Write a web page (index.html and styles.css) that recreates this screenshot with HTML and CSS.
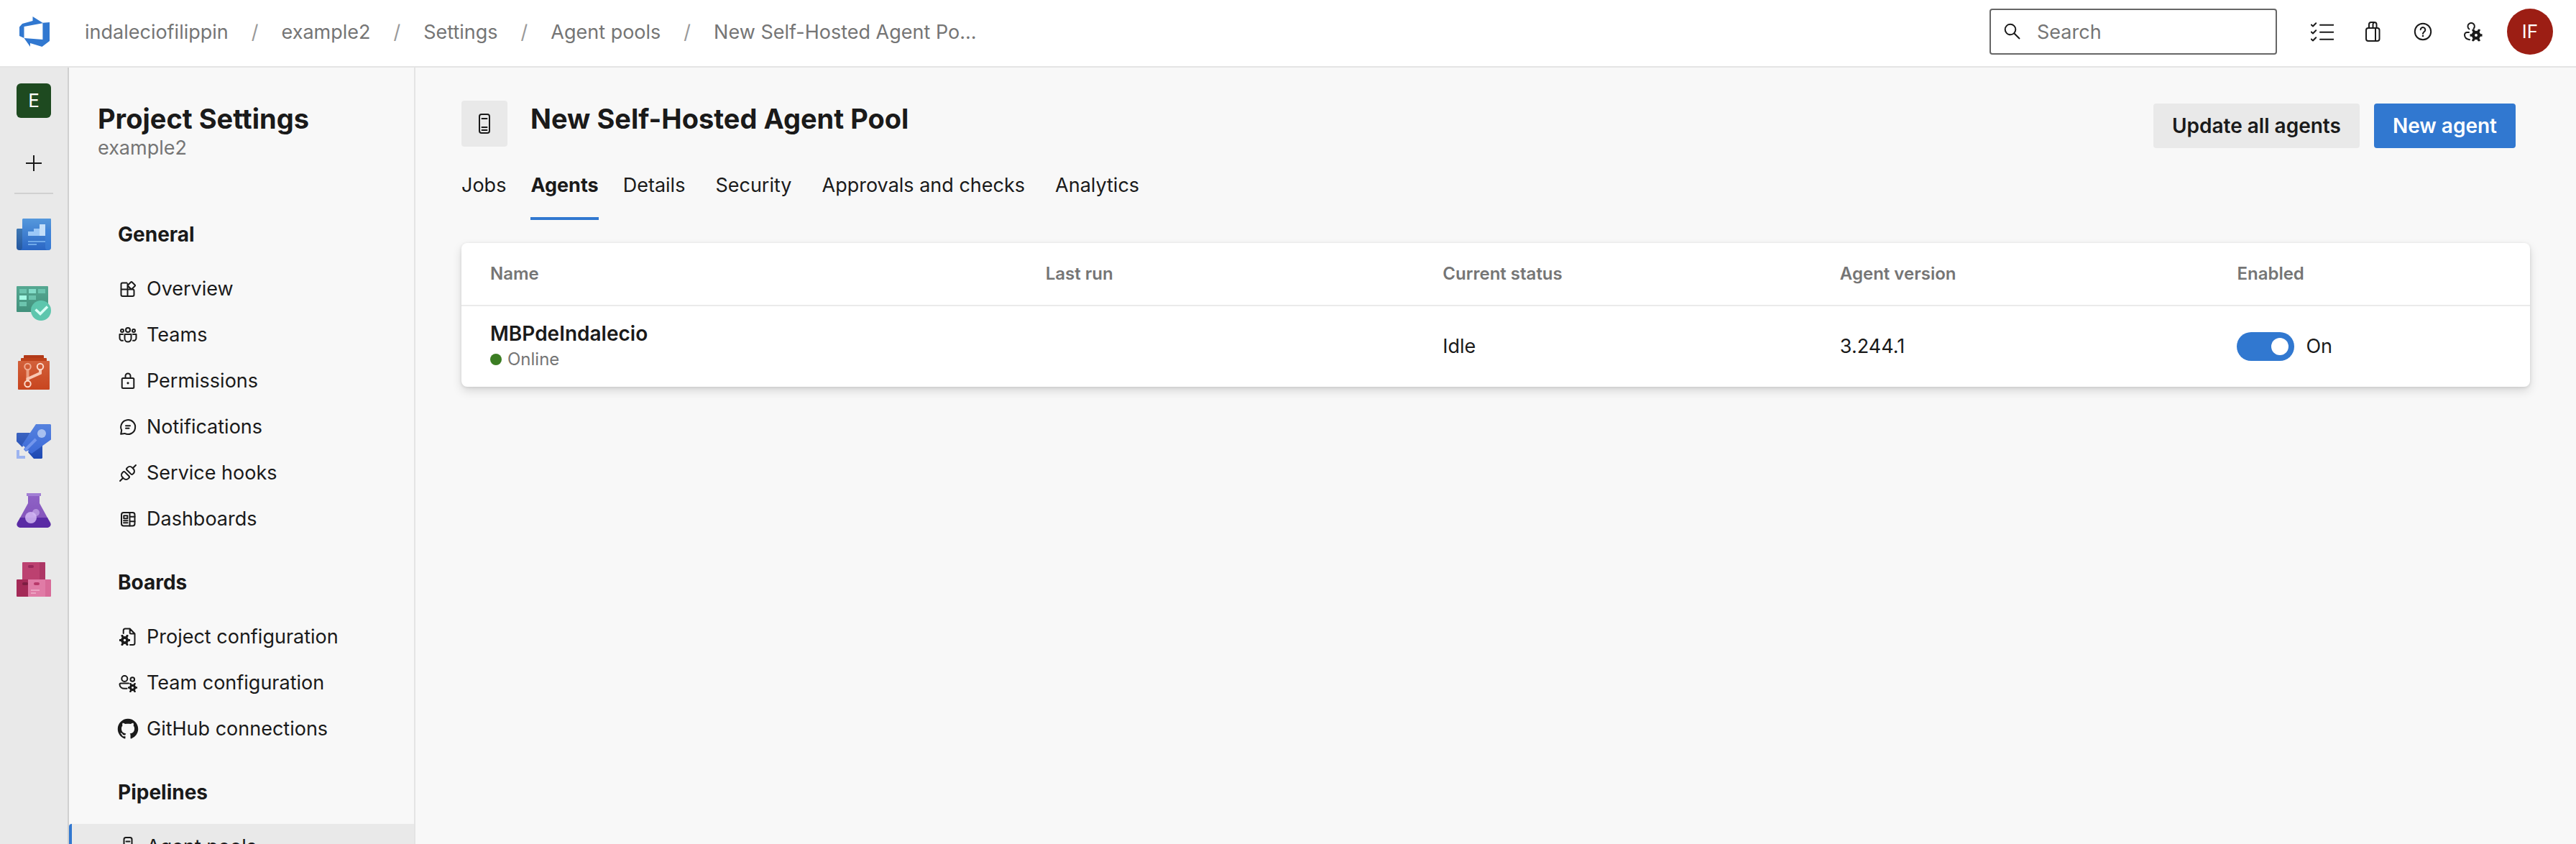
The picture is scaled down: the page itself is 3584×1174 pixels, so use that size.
FILE: index.html
```html
<!DOCTYPE html>
<html lang="en">
<head>
<meta charset="utf-8">
<meta name="viewport" content="width=device-width, initial-scale=1">
<title>Agent pools - Project Settings</title>
<link rel="stylesheet" href="styles.css">
</head>
<body>
<svg class="defs" aria-hidden="true">
  <defs>
    <symbol id="gear" viewBox="-10 -10 20 20">
      <circle r="4.8" fill="none" stroke="currentColor" stroke-width="5"/>
      <path d="M0-9.5V-5M0 9.5V5M8.2-4.8L5-3M-8.2 4.8L-5 3M8.2 4.8L5 3M-8.2-4.8L-5-3" fill="none" stroke="currentColor" stroke-width="4" transform="rotate(30)"/>
    </symbol>
    <linearGradient id="blue" x2="0" y2="1"><stop stop-color="#5598dc"/><stop offset="1" stop-color="#2a66c4"/></linearGradient>
    <linearGradient id="navy" x2="0" y2="1"><stop stop-color="#3f78b4"/><stop offset="1" stop-color="#24579f"/></linearGradient>
    <linearGradient id="teal" x2="0" y2="1"><stop stop-color="#56a892"/><stop offset="1" stop-color="#42917c"/></linearGradient>
    <linearGradient id="orange" x2="0" y2="1"><stop stop-color="#d2603a"/><stop offset="1" stop-color="#c8451f"/></linearGradient>
    <linearGradient id="rocket" x2="0" y2="1"><stop stop-color="#5682de"/><stop offset="1" stop-color="#3c6ad8"/></linearGradient>
    <linearGradient id="fins" x2="0" y2="1"><stop stop-color="#3c64c0"/><stop offset="1" stop-color="#1d49b4"/></linearGradient>
    <linearGradient id="purple" x2="0" y2="1"><stop stop-color="#8f62c6"/><stop offset="1" stop-color="#8455bb"/></linearGradient>
  </defs>
</svg>

<header class="topbar">
  <a class="logo" href="#" aria-label="Azure DevOps">
    <svg width="44" height="44" viewBox="0 0 44 44"><path fill="#3178d0" fill-rule="evenodd" d="M19.5 1L33.4 9.7L43 9V35L32.5 43L16 38V43L7.5 31L1 28V15.500L5 11L19.500 7ZM7.500 15V31L33.400 33V10.300Z"/></svg>
  </a>
  <nav class="crumbs" aria-label="Breadcrumb">
    <a href="#">indaleciofilippin</a><span class="slash">/</span>
    <a href="#">example2</a><span class="slash">/</span>
    <a href="#">Settings</a><span class="slash">/</span>
    <a href="#">Agent pools</a><span class="slash">/</span>
    <a href="#">New Self-Hosted Agent Po...</a>
  </nav>
  <label class="search">
    <svg width="24" height="24" viewBox="0 0 24 24" fill="none" stroke="currentColor" stroke-width="2"><circle cx="9" cy="9" r="7.300"/><path d="M14.200 14.200L22 22"/></svg>
    <input type="text" placeholder="Search" aria-label="Search">
  </label>
  <div class="tools">
    <button class="tool" aria-label="Work items"><svg class="icon" viewBox="0 0 32 32"><path d="M.8 6.500L3 8.500L7.200 4.200M.8 16.500L3 18.500L7.200 14.200M.8 26.500L3 28.500L7.200 24.200M13 6.700H31.500M13 16.700H31.500M13 26.700H31.500"/></svg></button>
    <button class="tool" aria-label="Marketplace"><svg class="icon" viewBox="0 0 32 32"><rect x="7" y="11" width="18.500" height="18" rx="3"/><path d="M11 11V6a3 3 0 0 1 3-3h4.500a3 3 0 0 1 3 3V11M16.500 11V6a3 3 0 0 1 2-3M20 11V29"/></svg></button>
    <button class="tool" aria-label="Help"><svg class="icon" viewBox="0 0 32 32"><circle cx="16" cy="16" r="11.200"/><path d="M12.700 13.300a3.300 3.300 0 1 1 5.500 2.500c-1.300 1.100-2.200 1.700-2.200 3.300"/><circle class="dot" cx="16" cy="22" r="1.300"/></svg></button>
    <button class="tool" aria-label="User settings"><svg class="icon" viewBox="0 0 32 32"><path d="M10.500 12.500A4.700 4.700 0 1 1 16.600 11.800M10 17H7.500a3.500 3.500 0 0 0-3.500 3.500C4 24 7 26.500 11 27.300"/><use href="#gear" x="11.500" y="12.500" width="17" height="17"/></svg></button>
  </div>
  <button class="avatar" aria-label="Account">IF</button>
</header>

<div class="body">
  <nav class="rail" aria-label="Project">
    <a class="project" href="#">E</a>
    <a class="add" href="#" aria-label="Add"><svg width="24" height="24" viewBox="0 0 24 24" stroke="currentColor" stroke-width="2"><path d="M12 1V23M1 12H23"/></svg></a>
    <hr class="rule">
    <a class="hub" href="#" aria-label="Overview"><svg width="48" height="48" viewBox="0 0 48 48"><path fill="url(#navy)" d="M1 16H8V46H4a4 4 0 0 1-4-4V17z"/><path fill="url(#blue)" d="M9 2H47a1 1 0 0 1 1 1V42a4 4 0 0 1-4 4H4a4 4 0 0 0 4-4V3z"/><path fill="#3f86dc" opacity=".6" d="M40 16H48V42a4 4 0 0 1-8 0z"/><path fill="#9cc8f7" d="M16 20H24V16H32V26H16z"/><path fill="#c4dff9" d="M32 10H40V26H32z"/><path fill="#6fa9ea" d="M16 33H40V35H16zM16 37H28V39H16z"/></svg></a>
    <a class="hub" href="#" aria-label="Boards"><svg width="48" height="48" viewBox="0 0 48 48"><rect width="44" height="36" rx="1" fill="url(#teal)"/><path fill="#6cc4ae" d="M4 4H14V10H4zM30 4H40V10H30zM17 13H27V19H17zM4 22H14V28H4z"/><path fill="#83dcc8" d="M17 4H27V10H17z"/><path fill="#a5fbe5" d="M4 13H14V19H4z"/><circle cx="34" cy="34" r="14" fill="#5dc6ad"/><path d="M26.500 32.500L33 38.500L43 28.500" fill="none" stroke="#d8fff5" stroke-width="3.500"/></svg></a>
    <a class="hub" href="#" aria-label="Repos"><svg width="48" height="48" viewBox="0 0 48 48"><rect x="10" width="28" height="6" rx="1" fill="#b23a18"/><rect x="6" y="4" width="36" height="8" rx="1" fill="#bd4019"/><rect x="2" y="8" width="44" height="40" rx="1" fill="url(#orange)"/><g fill="none" stroke="#fbd9ca" stroke-width="2"><path d="M15.500 20V36" stroke="#eb9d80" stroke-width="4"/><path d="M33 20V25L15.500 33V36" stroke="#f8c7b3" stroke-width="4"/><circle cx="15.500" cy="16" r="4.200" stroke="#f0ab92"/><circle cx="33" cy="16" r="4.200"/><circle cx="15.500" cy="40" r="4.200"/></g></svg></a>
    <a class="hub" href="#" aria-label="Pipelines"><svg width="48" height="48" viewBox="0 0 48 48"><path fill="url(#fins)" d="M1 12H19L8 32L0 24V13zM36 28V47L35 48H24L16 39z"/><path fill="url(#rocket)" d="M27 0H47L48 1V21.500L21 41L16 38L17 36L13 38L10 35L12 32L7.500 29z"/><circle cx="35" cy="13" r="6" fill="#a8c0f0"/><path d="M12 36L27 21" stroke="#7396ec" stroke-width="4"/><path fill="#9db4f0" d="M0 36H4V44H12V48H0z"/></svg></a>
    <a class="hub" href="#" aria-label="Test Plans"><svg width="48" height="48" viewBox="0 0 48 48"><path fill="url(#purple)" d="M16 3H32V14L43.500 35H4.500L16 14z"/><path fill="#5a2ba4" d="M5 34H43L47 41C49 45 46 48 42 48H6C2 48-1 45 1 41z"/><rect x="14" width="20" height="4" fill="#a27fd4"/><circle cx="27" cy="27" r="5" fill="#b391dc"/><circle cx="20" cy="34" r="8" fill="#d4b8f4" opacity=".85"/></svg></a>
    <a class="hub" href="#" aria-label="Artifacts"><svg width="48" height="48" viewBox="0 0 48 48"><rect x="8" width="32" height="26" rx="1" fill="#bc4170"/><path fill="#ad3765" d="M32 0H39L40 1V24H32z"/><rect x="16" y="4" width="8" height="4" rx="2" fill="#98285a"/><rect y="24" width="20" height="24" rx="1" fill="#a42a57"/><rect x="8" y="28" width="8" height="4" rx="2" fill="#7c1d42"/><rect x="16" y="24" width="32" height="24" rx="1" fill="#d86a98"/><path fill="#e07ba6" d="M16 24H40V48H17L16 47z"/><rect x="24" y="28" width="8" height="4" rx="2" fill="#b8396a"/><path fill="#eba3c2" d="M20 38H32V40H20zM20 42H27V44H20z"/></svg></a>
  </nav>

  <aside class="settings">
    <div class="settings-head">
      <h1 class="title">Project Settings</h1>
      <p class="subtitle">example2</p>
    </div>
    <h2 class="group">General</h2>
    <a class="item" href="#"><svg class="icon" viewBox="0 0 32 32"><path d="M14.500 7.500H8.500a2 2 0 0 0-2 2V24a2 2 0 0 0 2 2H22.500a2 2 0 0 0 2-2V18.500a2 2 0 0 0-2-2H6.500M15.500 26V9M21.500 6.200L25.800 10.500a.8.800 0 0 1 0 1.200L21.500 16a.8.800 0 0 1-1.200 0L16 11.700a.8.800 0 0 1 0-1.200L20.300 6.200a.8.800 0 0 1 1.200 0z"/></svg>Overview</a>
    <a class="item" href="#"><svg class="icon" viewBox="0 0 32 32"><circle cx="16" cy="9" r="3"/><circle cx="8" cy="10" r="2"/><circle cx="24" cy="10" r="2"/><path d="M11.500 15H20.500V21a4.500 4.500 0 0 1-9 0zM9 15H4.500V20.500a3.500 3.500 0 0 0 4.500 3.200M23 15H27.500V20.500a3.500 3.500 0 0 1-4.500 3.200"/></svg>Teams</a>
    <a class="item" href="#"><svg class="icon" viewBox="0 0 32 32"><rect x="7.700" y="12" width="16.600" height="14" rx="1.500"/><path d="M12.500 12V9a3.500 3.500 0 0 1 7 0V12"/><circle class="dot" cx="16" cy="18.800" r="1.600"/></svg>Permissions</a>
    <a class="item" href="#"><svg class="icon" viewBox="0 0 32 32"><path d="M6.200 25.800L7.200 20.500A10 10 0 1 1 11.500 24.900zM13 14.300H19M13 17.700H17.500"/></svg>Notifications</a>
    <a class="item" href="#"><svg class="icon" viewBox="0 0 32 32"><g transform="translate(16 16) rotate(-45)"><path d="M-15.500 0H-9.500M15.500 0H9.500M-2-4V4a1.800 1.800 0 0 1-1.800 1.800H-5A4.500 4.500 0 0 1-9.500 1.300V-1.300A4.500 4.500 0 0 1-5-5.800H-3.800A1.800 1.800 0 0 1-2-4zM2-4V4a1.800 1.800 0 0 0 1.800 1.800H5A4.500 4.500 0 0 0 9.500 1.300V-1.300A4.500 4.500 0 0 0 5-5.800H3.800A1.800 1.800 0 0 0 2-4z"/></g></svg>Service hooks</a>
    <a class="item" href="#"><svg class="icon" viewBox="0 0 32 32"><rect x="7" y="7" width="18.500" height="18.500" rx="3"/><path d="M18.500 7V25.500M18.500 12.700H25.500M18.500 19.300H25.500M10.300 11.300H15.300V15.300H10.300zM10 18.300H15.500M10 21.300H15.500"/></svg>Dashboards</a>
    <h2 class="group">Boards</h2>
    <a class="item" href="#"><svg class="icon" viewBox="0 0 32 32"><path d="M9.700 11V7a2.500 2.500 0 0 1 2.500-2.500H18.700L25.500 11.500V24.500a2.500 2.500 0 0 1-2.500 2.500H19M18.700 4.500V10a1.500 1.500 0 0 0 1.500 1.500H25.500"/><use href="#gear" x="4" y="13" width="15" height="15"/></svg>Project configuration</a>
    <a class="item" href="#"><svg class="icon" viewBox="0 0 32 32"><circle cx="11.300" cy="10" r="4"/><circle cx="22.300" cy="11" r="2.800"/><path d="M17 16.500H6a1.500 1.500 0 0 0-1.500 1.500C4.500 22 8 23.700 11.300 23.700H14.500"/><use href="#gear" x="16" y="16" width="13" height="13"/></svg>Team configuration</a>
    <a class="item" href="#"><svg class="icon" viewBox="-1 -1 18 18"><path class="dot" d="M8 0C3.580 0 0 3.580 0 8c0 3.540 2.290 6.530 5.470 7.590.4.070.55-.17.55-.38 0-.19-.01-.82-.01-1.490-2.010.37-2.530-.49-2.690-.94-.09-.23-.48-.94-.82-1.130-.28-.15-.68-.52-.01-.53.63-.01 1.080.58 1.230.82.720 1.210 1.870.87 2.330.66.070-.52.280-.87.510-1.070-1.780-.2-3.640-.89-3.640-3.950 0-.87.310-1.590.82-2.150-.08-.2-.36-1.020.08-2.120 0 0 .67-.21 2.200.82.640-.18 1.320-.27 2-.27s1.360.09 2 .27c1.530-1.040 2.200-.82 2.200-.82.440 1.100.160 1.920.080 2.120.510.560.820 1.270.820 2.150 0 3.070-1.870 3.750-3.650 3.950.290.250.540.730.540 1.480 0 1.070-.010 1.930-.010 2.200 0 .210.150.460.550.380A8.010 8.010 0 0 0 16 8c0-4.420-3.580-8-8-8z"/></svg>GitHub connections</a>
    <h2 class="group">Pipelines</h2>
    <a class="item selected" href="#" aria-current="page"><svg class="icon" viewBox="0 0 32 32"><rect x="10.500" y="3" width="11" height="26" rx="2.500"/><path d="M13.500 8.500H18.500M13.500 20.500H18.500M13.500 24.500H18.500"/></svg>Agent pools</a>
  </aside>

  <main class="main">
    <div class="pool-head">
      <span class="pool-icon"><svg class="icon" viewBox="0 0 32 32"><rect x="9" y="3" width="14" height="26" rx="3"/><path d="M12.500 9H19.500M12.500 21H19.500M12.500 25H19.500"/></svg></span>
      <h2 class="title">New Self-Hosted Agent Pool</h2>
      <div class="actions">
        <button class="btn">Update all agents</button>
        <button class="btn primary">New agent</button>
      </div>
    </div>
    <nav class="tabs" aria-label="Agent pool">
      <a class="tab" href="#">Jobs</a>
      <a class="tab active" href="#" aria-current="page">Agents</a>
      <a class="tab" href="#">Details</a>
      <a class="tab" href="#">Security</a>
      <a class="tab" href="#">Approvals and checks</a>
      <a class="tab" href="#">Analytics</a>
    </nav>
    <table class="agents">
      <thead>
        <tr><th class="name-col">Name</th><th>Last run</th><th>Current status</th><th>Agent version</th><th class="enabled-col">Enabled</th></tr>
      </thead>
      <tbody>
        <tr>
          <td><strong class="agent">MBPdeIndalecio</strong><span class="status">Online</span></td>
          <td></td>
          <td>Idle</td>
          <td>3.244.1</td>
          <td><label class="enabled"><input class="toggle" type="checkbox" role="switch" checked>On</label></td>
        </tr>
      </tbody>
    </table>
  </main>
</div>
</body>
</html>
```
FILE: styles.css
```css
* { box-sizing: border-box; }

body {
  margin: 0;
  height: 100vh;
  display: flex;
  flex-direction: column;
  overflow: hidden;
  font: 27px/40px Inter, sans-serif;
  color: #1a1a1a;
  background: #f8f8f8;
}

a { color: inherit; text-decoration: none; }
h1, h2, p { margin: 0; }
button, input { font: inherit; color: inherit; }
svg { display: block; flex: none; }

.defs { position: absolute; width: 0; height: 0; }

.icon {
  width: 32px;
  height: 32px;
  fill: none;
  stroke: currentColor;
  stroke-width: 2;
  stroke-linecap: round;
  stroke-linejoin: round;
}
.icon .dot { fill: currentColor; stroke: none; }

.title { font-size: 38px; font-weight: 700; line-height: 50px; }

/* Top bar */
.topbar {
  flex: none;
  display: flex;
  align-items: center;
  padding: 12px 32px 16px 26px;
  background: #fff;
  border-bottom: 2px solid #e4e4e4;
}
.crumbs {
  display: flex;
  gap: 32px;
  margin-left: 48px;
  padding-top: 2px;
  color: #757575;
  white-space: nowrap;
}
.slash { color: #999; }

.search {
  display: flex;
  align-items: center;
  gap: 22px;
  width: 400px;
  height: 64px;
  margin-left: auto;
  padding: 0 18px;
  border: 2px solid #666;
  border-radius: 4px;
}
.search input {
  flex: 1;
  min-width: 0;
  padding: 2px 0 0;
  border: 0;
  outline: 0;
  background: none;
}
.search input::placeholder { color: #757575; opacity: 1; }

.tools { display: flex; margin: 0 12px 0 28px; }
.tool {
  display: flex;
  justify-content: center;
  width: 70px;
  padding: 16px 0;
  border: 0;
  background: none;
}
.avatar {
  width: 64px;
  height: 64px;
  padding: 0;
  border: 0;
  border-radius: 50%;
  background: #9c1e14;
  color: #fff;
  font-size: 26px;
}

/* Columns below the bar */
.body { flex: 1; min-height: 0; display: flex; }

.rail {
  flex: none;
  width: 96px;
  display: flex;
  flex-direction: column;
  align-items: center;
  padding-top: 22px;
  border-right: 2px solid #d0d0d0;
  background: #e9e9e9;
}
.project {
  width: 48px;
  border-radius: 6px;
  background: #1e4a20;
  color: #fff;
  font-size: 26px;
  line-height: 48px;
  text-align: center;
}
.add { margin: 51px 0 29px; }
.rule {
  width: 54px;
  height: 2px;
  margin: 0 0 32px;
  border: 0;
  background: #d0d0d0;
}
.hub { margin-bottom: 48px; }

.settings {
  flex: none;
  width: 482px;
  overflow: hidden;
  border-right: 2px solid #e4e4e4;
}
.settings-head { height: 176px; padding: 46px 40px 0; }
.subtitle { line-height: 32px; color: #757575; }
.group {
  padding: 12px 68px 0;
  font-size: 28px;
  font-weight: 700;
  line-height: 88px;
}
.item {
  display: flex;
  align-items: center;
  gap: 10px;
  height: 64px;
  padding-left: 66px;
}
.item.selected {
  padding-left: 62px;
  border-left: 4px solid #3178d0;
  border-top-left-radius: 4px;
  background: #e9e9e9;
}

.main { flex: 1; min-width: 0; padding: 46px 64px; }
.pool-head { display: flex; gap: 32px; height: 64px; }
.pool-icon {
  padding: 16px;
  border-radius: 4px;
  background: #e9e9e9;
}
.actions {
  display: flex;
  gap: 20px;
  margin: 4px 20px 0 auto;
  height: 62px;
}
.btn {
  padding: 0 26px;
  border: 0;
  border-radius: 4px;
  background: #e9e9e9;
  font-size: 28px;
  font-weight: 600;
}
.btn.primary { background: #3178d0; color: #fff; }

.tabs { display: flex; gap: 34px; margin-top: 34px; }
.tab { height: 68px; border-bottom: 4px solid transparent; white-space: nowrap; }
.tab.active { border-color: #3178d0; font-weight: 700; }
.tab.active ~ .tab { margin-right: 8px; }

/* Agents table */
.agents {
  width: 100%;
  margin-top: 32px;
  table-layout: fixed;
  border-collapse: separate;
  border-spacing: 0;
  border-radius: 8px;
  background: #fff;
  box-shadow: 0 6px 14px rgba(0, 0, 0, .13), 0 1px 4px rgba(0, 0, 0, .11);
}
.agents th, .agents td { padding: 0 0 0 40px; text-align: left; }
.agents th {
  width: 19.2%;
  height: 88px;
  border-bottom: 2px solid #eaeaea;
  color: #757575;
  font-size: 24px;
  font-weight: 600;
}
.agents .name-col { width: 26.85%; }
.agents .enabled-col { width: auto; }
.agents td { height: 112px; }
.agent { display: block; font-size: 28px; font-weight: 600; line-height: 36px; }
.status {
  display: flex;
  align-items: center;
  gap: 8px;
  color: #757575;
  font-size: 24px;
  line-height: 36px;
}
.status::before {
  content: "";
  width: 16px;
  height: 16px;
  border-radius: 50%;
  background: #3b7d23;
}
.enabled { display: flex; align-items: center; gap: 16px; }
.toggle {
  appearance: none;
  width: 80px;
  height: 40px;
  margin: 0;
  padding: 8px;
  border-radius: 20px;
  background: #3178d0;
}
.toggle::before {
  content: "";
  display: block;
  width: 24px;
  height: 24px;
  margin-left: auto;
  border-radius: 50%;
  background: #fff;
}
```
